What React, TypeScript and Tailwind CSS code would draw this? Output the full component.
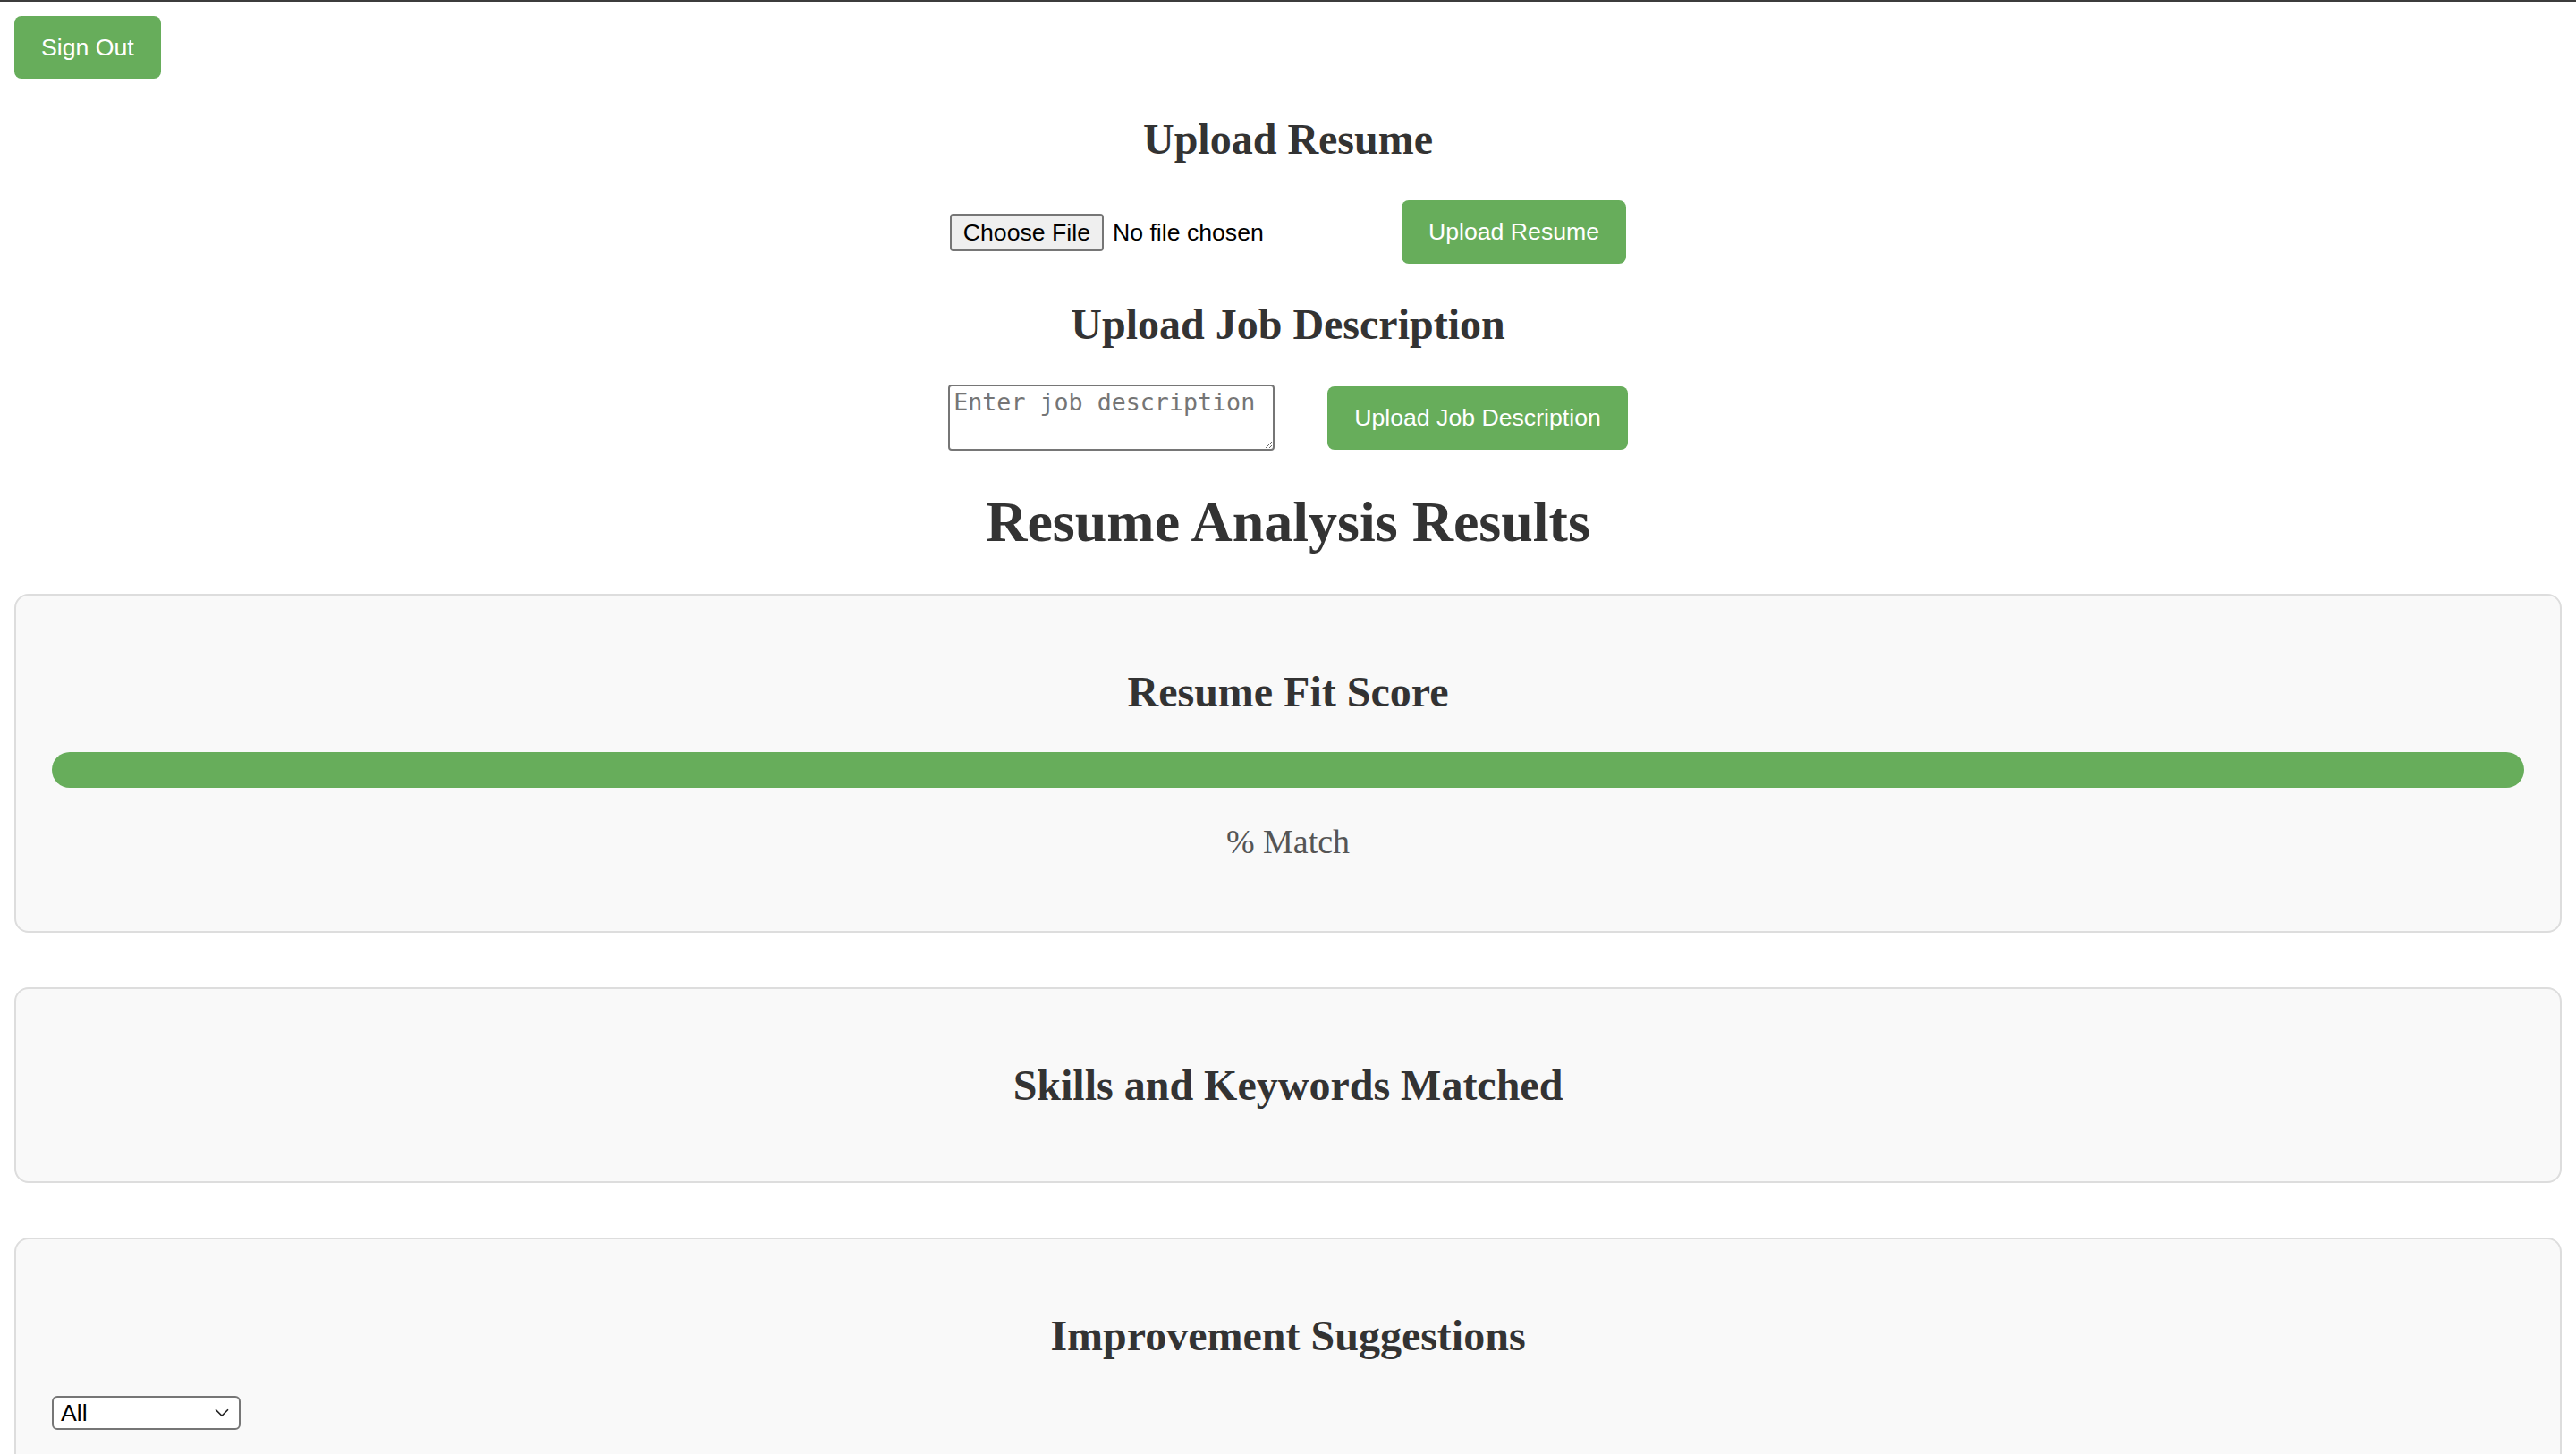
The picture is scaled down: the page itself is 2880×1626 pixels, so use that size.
import { ChevronDown } from "lucide-react";

const btn =
  "block rounded-[8px] bg-[#67ad5b] px-[30px] py-[20px] font-['Liberation_Sans',Arial,sans-serif] text-[26.67px] leading-[31px] text-white";

function Card({ title, children, className = "" }: { title: string; children?: React.ReactNode; className?: string }) {
  return (
    <section className={`rounded-[16px] border-2 border-[#ddd] bg-[#f9f9f9] p-[40px] ${className}`}>
      <h2 className="my-[40px] text-center text-[48px] font-bold leading-[55px]">{title}</h2>
      {children}
    </section>
  );
}

export default function App() {
  return (
    <div className="min-h-screen bg-white font-['Liberation_Serif','Times_New_Roman',serif] text-[#333]">
      <div className="h-[2px] bg-[#3c3c3c]" />
      <div className="px-[16px] pt-[16px]">
        <button className={`${btn} h-[70px]`}>Sign Out</button>

        {/* Resume upload */}
        <h2 className="mt-[40px] mb-[41px] text-center text-[48px] font-bold leading-[55px]">Upload Resume</h2>
        <div className="flex h-[71px] items-center justify-center gap-[59px]">
          <div className="flex w-[446px] items-center gap-[10px] font-['Liberation_Sans',Arial,sans-serif] text-[26.67px] leading-[30px] text-black">
            <span className="flex h-[42px] w-[172px] items-center justify-center rounded-[4px] border-2 border-[#767676] bg-[#efefef]">
              Choose File
            </span>
            <span>No file chosen</span>
          </div>
          <button className={btn}>Upload Resume</button>
        </div>

        {/* Job description */}
        <h2 className="my-[40px] text-center text-[48px] font-bold leading-[55px]">Upload Job Description</h2>
        <div className="flex items-center justify-center gap-[59px]">
          <textarea
            placeholder="Enter job description"
            className="box-border h-[74px] w-[365px] resize rounded-[4px] border-2 border-[#767676] bg-white px-[4px] py-[2px] font-['DejaVu_Sans_Mono',monospace] text-[26.67px] leading-[31px] text-black placeholder:text-[#757575]"
          />
          <button className={btn}>Upload Job Description</button>
        </div>

        <h1 className="mt-[43px] mb-[43px] text-center text-[64px] font-bold leading-[74px]">Resume Analysis Results</h1>

        <Card title="Resume Fit Score" className="mb-[61px]">
          <div className="h-[40px] rounded-full bg-[#67ad5b]" />
          <p className="my-[38px] text-center text-[38px] leading-[44px] text-[#555]">% Match</p>
        </Card>

        <Card title="Skills and Keywords Matched" className="mb-[61px]" />

        <Card title="Improvement Suggestions">
          <div className="flex h-[38px] w-[211px] items-center justify-between rounded-[6px] border-2 border-[#767676] bg-white pl-[8px] pr-[6px] font-['Liberation_Sans',Arial,sans-serif] text-[26.67px] text-black">
            <span>All</span>
            <ChevronDown className="h-[26px] w-[26px] text-[#222]" strokeWidth={1.6} />
          </div>
          <div className="h-[300px]" />
        </Card>
      </div>
    </div>
  );
}
